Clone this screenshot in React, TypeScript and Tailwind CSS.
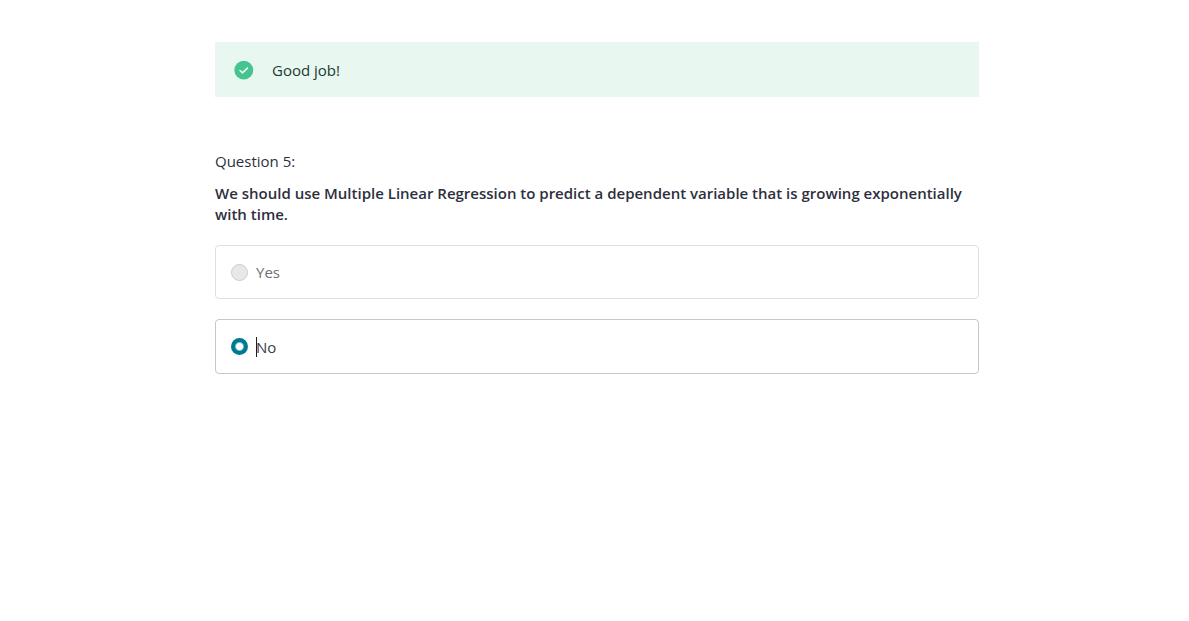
import { useState } from "react";

const answers = [
  { id: "yes", label: "Yes" },
  { id: "no", label: "No" },
];

function SuccessBanner() {
  return (
    <div role="status" className="flex h-[55px] items-center gap-[18px] bg-[#e8f7f0] pl-[19px] text-[#1b3a31]">
      <svg viewBox="0 0 20 20" className="size-5 shrink-0" aria-hidden="true">
        <circle cx="9.8" cy="10.2" r="9.4" fill="#45c48f" />
        <path
          d="M6 10.5 8.6 12.8 13.4 8.1"
          fill="none"
          stroke="#f4fcf8"
          strokeWidth="1.6"
          strokeLinecap="round"
          strokeLinejoin="round"
        />
      </svg>
      <p>Good job!</p>
    </div>
  );
}

function Quiz() {
  const [selected, setSelected] = useState("no");

  return (
    <fieldset className="mt-[54px]">
      <legend className="leading-[21px]">Question 5:</legend>
      <p className="mt-[11px] font-semibold leading-[21px]">
        We should use Multiple Linear Regression to predict a dependent variable that is growing
        exponentially with time.
      </p>
      <div className="mt-5 flex flex-col gap-5">
        {answers.map(({ id, label }) => {
          const active = selected === id;
          return (
            <label
              key={id}
              htmlFor={id}
              className={
                active
                  ? "flex h-[55px] items-center rounded border border-[#c6c7ca] px-[15px] text-[#3c3b4a]"
                  : "flex h-[54px] items-center rounded border border-[#dedfe1] px-[15px] text-[#6f7177]"
              }
            >
              <input
                id={id}
                type="radio"
                name="answer"
                checked={active}
                onChange={() => setSelected(id)}
                className={
                  active
                    ? "size-[17px] shrink-0 appearance-none rounded-full bg-[radial-gradient(circle,white_3px,#007a91_5px)] outline-none"
                    : "size-[17px] shrink-0 appearance-none rounded-full border border-[#cbccce] bg-[#e7e8ea] outline-none"
                }
              />
              <span className="relative ml-2">
                {active && <span className="absolute inset-y-0 left-0 w-px bg-[#1e1e28]" />}
                {label}
              </span>
            </label>
          );
        })}
      </div>
    </fieldset>
  );
}

export default function App() {
  return (
    <div className="min-h-screen bg-white pl-[5px] pt-[42px] font-['Open_Sans','Noto_Sans',sans-serif] text-[15px] leading-5 text-[#2d2f3e]">
      <main className="mx-auto max-w-[764px]">
        <SuccessBanner />
        <Quiz />
      </main>
    </div>
  );
}
